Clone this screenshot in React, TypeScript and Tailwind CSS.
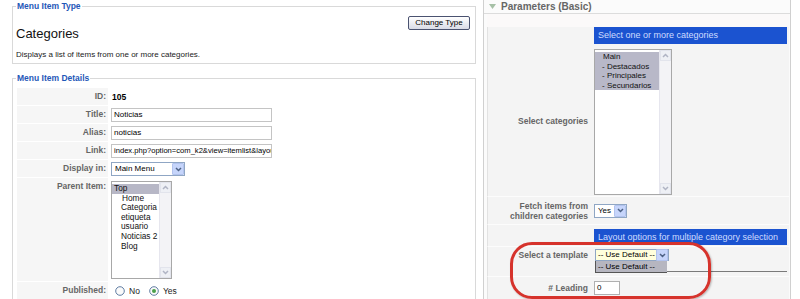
import React from "react";

const Chevron = ({ up = false, color = "#4d6185" }: { up?: boolean; color?: string }) => (
  <svg width="7" height="5" viewBox="0 0 7 5">
    <path d={up ? "M1 4 L3.5 1.5 L6 4" : "M1 1 L3.5 3.5 L6 1"} fill="none" stroke={color} strokeWidth="1.5" />
  </svg>
);

const ArrowBtn = () => (
  <div className="w-[12px] h-[12px] bg-[#c6d5fb] border border-[#b2c3ee] rounded-[1px] flex items-center justify-center">
    <Chevron />
  </div>
);

const ScrollBar = () => (
  <div className="w-[12px] h-full bg-[#f3f3f6] border-l border-[#e6e6ee] flex flex-col justify-between">
    <div className="h-[11px] bg-[#eef0f5] border border-[#e2e4ec] flex items-center justify-center">
      <Chevron up color="#b0b4c4" />
    </div>
    <div className="h-[11px] bg-[#eef0f5] border border-[#e2e4ec] flex items-center justify-center">
      <Chevron color="#b0b4c4" />
    </div>
  </div>
);

const Radio = ({ checked = false }: { checked?: boolean }) => (
  <svg width="10" height="10" viewBox="0 0 10 10">
    <circle cx="5" cy="5" r="4.3" fill="#fafafa" stroke="#4f6f99" strokeWidth="0.9" />
    {checked && <circle cx="5" cy="5" r="2" fill="#4aa04a" />}
  </svg>
);

const lbl = "text-[8.5px] font-bold text-[#666]";

export default function App() {
  return (
    <div className="relative w-[800px] h-[299px] overflow-hidden bg-white flex font-['Liberation_Sans',Arial,sans-serif] text-black">
      {/* Left column */}
      <div className="w-[476px] shrink-0 pl-[12px]">
        <fieldset className="h-[64px] border border-[#d9d9d9] px-0">
          <legend className="ml-[3px] px-[1px] text-[8.5px] leading-[12px] font-bold text-[#1f58b8]">Menu Item Type</legend>
          <div className="pl-[3px] pr-[5px]">
            <div className="flex justify-between items-start">
              <div className="mt-[14px] text-[13px] leading-[15px] text-[#111]">Categories</div>
              <button className="mt-[4px] w-[62px] h-[14px] border border-[#4a5270] rounded-[2px] bg-linear-to-b from-white to-[#d9dbe6] text-[8px] leading-[12px] text-black">
                Change Type
              </button>
            </div>
            <div className="mt-[9px] text-[8px] leading-[10px] text-[#222]">Displays a list of items from one or more categories.</div>
          </div>
        </fieldset>

        <fieldset className="mt-[8px] h-[260px] border border-[#d9d9d9] px-0">
          <legend className="ml-[3px] px-[1px] text-[8.5px] leading-[12px] font-bold text-[#1f58b8]">Menu Item Details</legend>
          <div className="mt-[4px] pl-[4px] flex flex-col">
            <div className="flex h-[18px]">
              <div className={`w-[91px] bg-[#f6f6f6] border-b border-white text-right pr-[2px] leading-[17px] ${lbl}`}>ID:</div>
              <div className="pl-[4px] flex items-center text-[8.5px] font-bold">105</div>
            </div>
            {[
              ["Title:", "Noticias"],
              ["Alias:", "noticias"],
              ["Link:", "index.php?option=com_k2&view=itemlist&layout=category"],
            ].map(([l, v]) => (
              <div key={l} className="flex h-[18px]">
                <div className={`w-[91px] bg-[#f6f6f6] border-b border-white text-right pr-[2px] leading-[17px] ${lbl}`}>{l}</div>
                <div className="pl-[3px] flex items-center">
                  <div className={`w-[161px] h-[14px] border border-[#c4c4c4] bg-white px-[2px] leading-[12px] whitespace-nowrap overflow-hidden ${l === "Link:" ? "text-[7.6px]" : "text-[8px]"}`}>{v}</div>
                </div>
              </div>
            ))}
            <div className="flex h-[18px]">
              <div className={`w-[91px] bg-[#f6f6f6] border-b border-white text-right pr-[2px] leading-[17px] ${lbl}`}>Display in:</div>
              <div className="pl-[3px] flex items-center">
                <div className="w-[74px] h-[14px] border border-[#8fa6c4] bg-white flex items-center justify-between pl-[3px] pr-[0px]">
                  <span className="text-[8px] leading-[12px]">Main Menu</span>
                  <ArrowBtn />
                </div>
              </div>
            </div>
            <div className="flex h-[104px]">
              <div className={`w-[91px] bg-[#f6f6f6] border-b border-white text-right pr-[2px] leading-[17px] ${lbl}`}>Parent Item:</div>
              <div className="pl-[3px] pt-[3px]">
                <div className="w-[61px] h-[98px] border border-[#a8a8a8] bg-white flex">
                  <div className="flex-1 pt-[2px] text-[8.3px] leading-[9.6px] text-[#111]">
                    <div className="bg-[#b7b7c6] pl-[2px]">Top</div>
                    <div className="pl-[10px]">Home</div>
                    <div className="pl-[9px]">Categoria</div>
                    <div className="pl-[9px]">etiqueta</div>
                    <div className="pl-[9px]">usuario</div>
                    <div className="pl-[9px]">Noticias 2</div>
                    <div className="pl-[9px]">Blog</div>
                  </div>
                  <ScrollBar />
                </div>
              </div>
            </div>
            <div className="flex h-[18px]">
              <div className={`w-[91px] bg-[#f6f6f6] border-b border-white text-right pr-[2px] leading-[17px] ${lbl}`}>Published:</div>
              <div className="pl-[7px] flex items-center gap-[4px] text-[8.5px] text-[#222]">
                <Radio />
                <span className="mr-[5px]">No</span>
                <Radio checked />
                <span>Yes</span>
              </div>
            </div>
          </div>
        </fieldset>
      </div>

      {/* Right panel */}
      <div className="ml-[7px] w-[308px] shrink-0 border-x border-[#d0d0d0] flex flex-col">
        <div className="h-[17px] border-b border-[#dcdcdc] bg-[#fbfbfb] flex items-center pl-[5px] gap-[5px]">
          <svg width="7" height="5" viewBox="0 0 7 5">
            <path d="M0 0 L7 0 L3.5 5 Z" fill="#a6c0a6" />
          </svg>
          <span className="text-[10px] font-bold text-[#666] leading-[12px]">Parameters (Basic)</span>
        </div>
        <div className="flex flex-col pl-[3px] pr-[1px] bg-[#fbfbfb]">
          <div className="h-[13px] bg-[#fbf9f9]" />
          {/* Row 1 */}
          <div className="flex h-[20px]">
            <div className="w-[105px] bg-[#f4f4f4] border-l border-[#e2e2e2]" />
            <div className="flex-1 bg-[#f4f4f4] pl-[2px] pr-[2px]">
              <div className="h-[17px] bg-[#1b53d0] pl-[4px] text-[9px] leading-[17px] text-[#cfdcff]">Select one or more categories</div>
            </div>
          </div>
          {/* Row 2 */}
          <div className="flex h-[150px]">
            <div className={`w-[105px] bg-[#f4f4f4] border-l border-[#e2e2e2] border-b border-b-[#fcfcfc] flex items-center justify-end pr-[4px] ${lbl}`}>Select categories</div>
            <div className="flex-1 bg-[#f4f4f4] border-b border-[#fcfcfc] pl-[2px] pt-[2px]">
              <div className="w-[78px] h-[146px] border border-[#a8a8a8] bg-white flex">
                <div className="flex-1 pt-[2px] text-[8px] leading-[9.5px] text-[#111]">
                  <div className="bg-[#b8b8c8] pl-[8px]">Main</div>
                  <div className="bg-[#b8b8c8] pl-[7px]">- Destacados</div>
                  <div className="bg-[#b8b8c8] pl-[7px]">- Principales</div>
                  <div className="bg-[#b8b8c8] pl-[7px]">- Secundarios</div>
                </div>
                <ScrollBar />
              </div>
            </div>
          </div>
          {/* Row 3 */}
          <div className="flex h-[28px]">
            <div className={`w-[105px] bg-[#f4f4f4] border-l border-[#e2e2e2] border-b border-b-[#fcfcfc] flex flex-col items-end justify-center pr-[4px] leading-[10px] ${lbl}`}>
              <span>Fetch items from</span>
              <span>children categories</span>
            </div>
            <div className="flex-1 bg-[#f4f4f4] border-b border-[#fcfcfc] pl-[2px] flex items-center">
              <div className="w-[33px] h-[14px] border border-[#8fa6c4] bg-white flex items-center justify-between pl-[3px]">
                <span className="text-[8px] leading-[12px]">Yes</span>
                <ArrowBtn />
              </div>
            </div>
          </div>
          {/* Row 4 */}
          <div className="flex h-[22px]">
            <div className="w-[105px] bg-[#f4f4f4] border-l border-[#e2e2e2] border-b border-b-[#fcfcfc]" />
            <div className="flex-1 bg-[#f4f4f4] border-b border-[#fcfcfc] pl-[2px] pr-[2px] pt-[4px]">
              <div className="h-[16px] bg-[#1b53d0] pl-[4px] text-[9px] leading-[16px] text-[#cfdcff]">Layout options for multiple category selection</div>
            </div>
          </div>
          {/* Row 5 */}
          <div className="flex h-[30px]">
            <div className={`w-[105px] bg-[#f4f4f4] border-l border-[#e2e2e2] border-b border-b-[#fcfcfc] text-right pr-[4px] pt-[3px] leading-[11px] ${lbl}`}>Select a template</div>
            <div className="flex-1 bg-[#f4f4f4] border-b border-[#fcfcfc] pl-[3px] pr-[2px] pt-[2px] flex flex-col">
              <div className="w-[74px] h-[12px] border border-[#8fa6c4] bg-[#ffffdc] flex items-center justify-between pl-[2px]">
                <span className="text-[8px] leading-[10px]">-- Use Default --</span>
                <ArrowBtn />
              </div>
              <div className="flex items-end">
                <div className="w-[72px] h-[12px] bg-[#b6b6c0] border-l border-b border-[#555] pl-[2px] text-[8px] leading-[11px]">-- Use Default --</div>
                <div className="flex-1 h-[1px] bg-[#7a7a7a] mb-[1px]" />
              </div>
            </div>
          </div>
          {/* Row 6 */}
          <div className="flex h-[22px]">
            <div className={`w-[105px] bg-[#f4f4f4] border-l border-[#e2e2e2] flex items-center justify-end pr-[4px] ${lbl}`}># Leading</div>
            <div className="flex-1 bg-[#f4f4f4] pl-[2px] flex items-center">
              <div className="w-[26px] h-[14px] border border-[#b0b0b0] bg-white pl-[2px] text-[8px] leading-[12px]">0</div>
            </div>
          </div>
        </div>
      </div>

      {/* Red annotation */}
      <div className="absolute left-[510px] top-[242px] w-[201px] h-[57px] rounded-[22px] border-[3px] border-[#d6332c] shadow-[1px_1px_2px_rgba(0,0,0,0.25)]" />
    </div>
  );
}
